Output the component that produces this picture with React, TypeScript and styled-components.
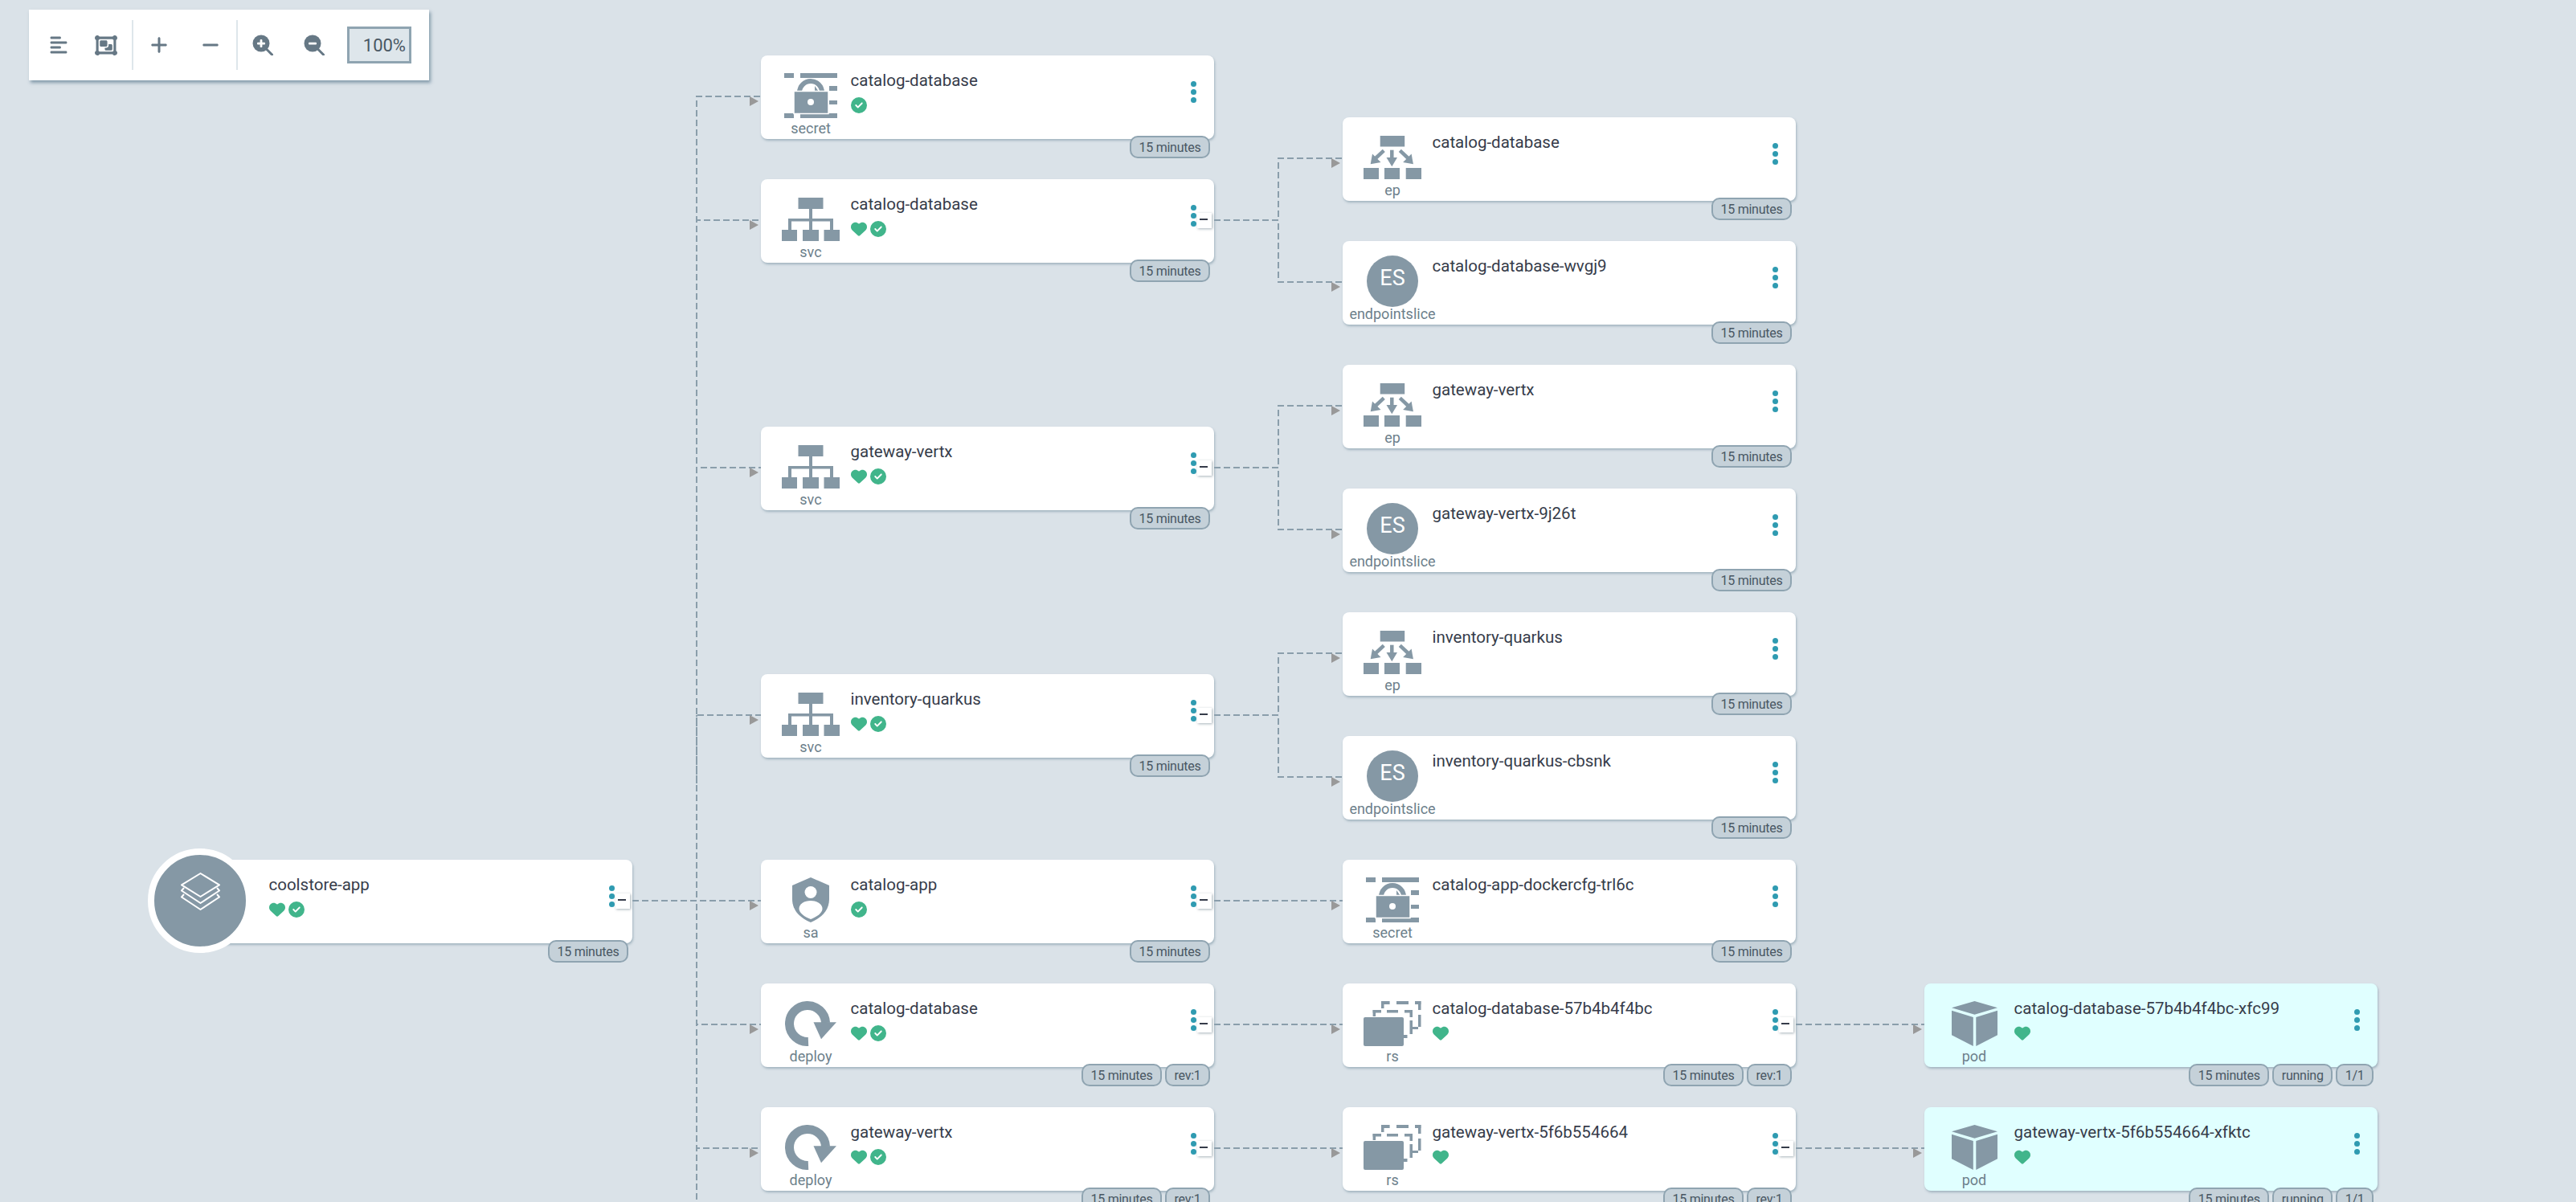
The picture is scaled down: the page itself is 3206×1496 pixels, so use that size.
import React from 'react';
import styled, { createGlobalStyle } from 'styled-components';
import { FaAlignLeft, FaObjectGroup, FaPlus, FaMinus, FaHeart, FaCircleCheck } from 'react-icons/fa6';

const Global = createGlobalStyle`
  html, body { margin: 0; padding: 0; background: #dae2e8; }
  body { font-family: Roboto, "Liberation Sans", sans-serif; }
`;

const Canvas = styled.div`
  position: relative;
  width: 3206px;
  height: 1496px;
  overflow: hidden;
  background: #dae2e8;
`;

const EdgeLayer = styled.svg`
  position: absolute;
  left: 0;
  top: 0;
`;

const Toolbar = styled.div`
  position: absolute;
  left: 36px;
  top: 12px;
  width: 498px;
  height: 88px;
  box-sizing: border-box;
  padding-left: 7px;
  display: flex;
  align-items: center;
  background: #fff;
  box-shadow: 2px 3px 4px rgba(96, 125, 145, 0.7);
  z-index: 5;
`;

const ToolButton = styled.div<{ $w: number }>`
  width: ${(p) => p.$w}px;
  height: 62px;
  display: flex;
  align-items: center;
  justify-content: center;
  color: #667885;
  svg { display: block; }
`;

const ToolDivider = styled.div<{ $ml?: number }>`
  width: 2px;
  height: 62px;
  margin-left: ${(p) => p.$ml ?? 0}px;
  background: #dee6eb;
`;

const ZoomInput = styled.div`
  box-sizing: border-box;
  width: 80px;
  height: 46px;
  margin-left: 8px;
  padding-right: 4px;
  display: flex;
  align-items: center;
  justify-content: flex-end;
  border: 3px solid #8fa4b1;
  background: #dee6eb;
  color: #495763;
  font-size: 22px;
  font-weight: 400;
`;

const Card = styled.div.attrs<{ $x: number; $y: number }>((p) => ({
  style: { left: p.$x, top: p.$y },
}))<{ $x: number; $y: number; $pod?: boolean }>`
  position: absolute;
  width: 564px;
  height: 104px;
  display: flex;
  border-radius: 8px;
  background: ${(p) => (p.$pod ? '#e0ffff' : '#fff')};
  box-shadow: 1px 2px 3px rgba(143, 164, 177, 0.75);
`;

const KindCol = styled.div`
  flex: 0 0 124px;
  width: 124px;
  height: 104px;
  display: flex;
  flex-direction: column;
  align-items: center;
`;

const IconArea = styled.div`
  box-sizing: border-box;
  height: 81px;
  padding-top: 22px;
  display: flex;
  justify-content: center;
  svg { display: block; }
`;

const KindLabel = styled.div`
  height: 20px;
  line-height: 20px;
  font-size: 18px;
  color: #6d7f8b;
  white-space: nowrap;
`;

const EsBadge = styled.div`
  box-sizing: border-box;
  width: 64px;
  height: 64px;
  margin-top: -4px;
  padding-bottom: 8px;
  border-radius: 50%;
  background: #8598a5;
  color: #fff;
  display: flex;
  align-items: center;
  justify-content: center;
  font-size: 27px;
  font-weight: 400;
`;

const Content = styled.div`
  flex: 1;
  margin-left: -12.5px;
  padding-top: 19px;
  min-width: 0;
`;

const Title = styled.div`
  height: 24px;
  line-height: 24px;
  font-size: 20.5px;
  color: #363c4a;
  white-space: nowrap;
`;

const StatusRow = styled.div`
  height: 21px;
  margin-top: 8px;
  display: flex;
  align-items: center;
  gap: 4px;
  color: #41b58b;
  svg { display: block; width: 20px; height: 20px; }
`;

const Dots = styled.div`
  flex: 0 0 7px;
  margin: 32px 22px 0 0;
  display: flex;
  flex-direction: column;
  gap: 3px;
  align-self: flex-start;
`;

const Dot = styled.span`
  display: block;
  width: 7px;
  height: 7px;
  border-radius: 50%;
  background: #2f9bb1;
`;

const Collapse = styled.div`
  position: absolute;
  right: 3px;
  top: 42px;
  width: 18px;
  height: 19px;
  background: #fff;
  box-shadow: 1px 1px 3px rgba(109, 127, 139, 0.6);
  &::after {
    content: '';
    position: absolute;
    left: 3px;
    top: 7px;
    width: 10px;
    height: 2px;
    background: #363c4a;
  }
`;

const Tags = styled.div`
  position: absolute;
  right: 5px;
  top: 100px;
  display: flex;
  gap: 4px;
`;

const Tag = styled.div`
  box-sizing: border-box;
  height: 28px;
  padding: 0 9.5px;
  display: flex;
  align-items: center;
  border: 2px solid #8fa4b1;
  border-radius: 10px;
  background: #c5d1d9;
  color: #495763;
  font-size: 16px;
  letter-spacing: -0.25px;
  white-space: nowrap;
`;

const RootBadge = styled.div`
  position: absolute;
  left: -39px;
  top: -14px;
  width: 130px;
  height: 130px;
  box-sizing: border-box;
  border: 8px solid #fff;
  border-radius: 50%;
  background: #8598a5;
  display: flex;
  justify-content: center;
  padding-top: 22px;
  svg { display: block; }
`;

const G = '#8598a5';

const SecretIcon = () => (
  <svg width="66" height="56" viewBox="0 0 66 56">
    <g fill={G}>
      <rect x="0" y="0" width="12" height="6" />
      <rect x="20" y="0" width="46" height="6" />
      <rect x="56" y="16" width="10" height="6" />
      <rect x="56" y="34" width="10" height="5" />
      <rect x="0" y="50" width="12" height="6" />
      <rect x="20" y="50" width="46" height="6" />
    </g>
    <path d="M19 24A14 14 0 0 1 47 24" fill="none" stroke={G} strokeWidth="6" />
    <path d="M38 16l5 7h-5z" fill={G} />
    <rect x="12" y="22.5" width="43" height="28" fill={G} stroke="#fff" strokeWidth="1.5" />
    <circle cx="33" cy="36" r="4" fill="#fff" />
  </svg>
);

const SvcIcon = () => (
  <svg width="72" height="54" viewBox="0 0 72 54" style={{ marginTop: 1 }}>
    <g fill={G}>
      <rect x="20.5" y="0" width="31" height="14" />
      <rect x="34" y="14" width="4" height="26" />
      <rect x="8" y="26" width="56" height="3.5" />
      <rect x="8" y="26" width="4" height="14" />
      <rect x="60" y="26" width="4" height="14" />
      <rect x="0" y="40" width="19" height="14" />
      <rect x="26" y="40" width="20" height="14" />
      <rect x="52.5" y="40" width="19.5" height="14" />
    </g>
  </svg>
);

const EpIcon = () => (
  <svg width="72" height="54" viewBox="0 0 72 54" style={{ marginTop: 1 }}>
    <g fill={G}>
      <rect x="20.7" y="0" width="30.5" height="13.5" />
      <rect x="0" y="40" width="19" height="14" />
      <rect x="26" y="40" width="19" height="14" />
      <rect x="52.7" y="40" width="19.3" height="14" />
      <polygon points="28.5,27 42,27 35.3,38.3" />
      <polygon points="8.7,35.3 11,22.5 21.5,33" />
      <polygon points="61.9,35.3 59.6,22.5 49.1,33" />
    </g>
    <g stroke={G} strokeWidth="4.5">
      <line x1="35.3" y1="17.7" x2="35.3" y2="28" />
      <line x1="25.3" y1="18.3" x2="15" y2="28" />
      <line x1="45.3" y1="18.3" x2="55.6" y2="28" />
    </g>
  </svg>
);

const DeployIcon = () => (
  <svg width="64" height="56" viewBox="0 0 64 56">
    <path d="M29 50.5A22.5 22.5 0 1 1 50.5 27" fill="none" stroke={G} strokeWidth="11" />
    <polygon points="35.5,26.3 64,26.3 45,47.3" fill={G} />
  </svg>
);

const RsIcon = () => (
  <svg width="72" height="56" viewBox="0 0 72 56">
    <g fill={G}>
      <rect x="22" y="0" width="10.6" height="4" />
      <rect x="41" y="0" width="15" height="4" />
      <rect x="64" y="0" width="7.4" height="4" />
      <rect x="22" y="0" width="3.5" height="9" />
      <rect x="68" y="0" width="3.5" height="11" />
      <rect x="68" y="17" width="3.5" height="15" />
      <rect x="61" y="32" width="7" height="3" />
      <rect x="11.6" y="11" width="10.4" height="3.5" />
      <rect x="29" y="11" width="14" height="3.5" />
      <rect x="51" y="11" width="10" height="3.5" />
      <rect x="11.6" y="11" width="3.5" height="8" />
      <rect x="57.5" y="11" width="3.5" height="9" />
      <rect x="57.5" y="24" width="3.5" height="17" />
      <rect x="50" y="42" width="4.5" height="4" />
      <rect x="0" y="20" width="50" height="36" rx="2" />
    </g>
  </svg>
);

const PodIcon = () => (
  <svg width="57" height="56" viewBox="0 0 57.2 56">
    <g fill={G}>
      <polygon points="28.6,0 57.2,8.3 28.6,16.7 0,8.3" />
      <polygon points="0,11.7 26.9,20 26.9,56 0,42.3" />
      <polygon points="30.4,20 57.2,11.7 57.2,42.3 30.4,56" />
    </g>
  </svg>
);

const SaIcon = () => (
  <svg width="46" height="56" viewBox="0 0 46 56">
    <path d="M23 0L46 10V27C46 42 35 51 23 56C11 51 0 42 0 27V10Z" fill={G} />
    <circle cx="23" cy="18.5" r="7.5" fill="#fff" />
    <path d="M23 29C31 29 37.5 33 37.5 39C37.5 44 31 49 23 52C15 49 8.5 44 8.5 39C8.5 33 15 29 23 29Z" fill="#fff" />
  </svg>
);

const LayersIcon = () => (
  <svg width="49" height="47" viewBox="-1 -1 49 47" fill="none" stroke="#fff" strokeWidth="2" strokeLinejoin="round">
    <polygon points="23.5,0 47,14.3 23.5,29 0,14.3" />
    <path d="M3 18L0 21.5L23.5 37L47 21.5L44 18" />
    <path d="M3 26L0 29.5L23.5 45L47 29.5L44 26" />
  </svg>
);

const SearchIcon = ({ plus }: { plus?: boolean }) => (
  <svg width="26" height="26" viewBox="0 0 26 26">
    <circle cx="11" cy="11" r="10.5" fill="currentColor" />
    <line x1="18" y1="18.5" x2="24.5" y2="25" stroke="currentColor" strokeWidth="3" strokeLinecap="round" />
    <rect x="6" y="9.7" width="10" height="2.8" rx="1" fill="#fff" />
    {plus && <rect x="9.6" y="6" width="2.8" height="10" rx="1" fill="#fff" />}
  </svg>
);

type Kind = 'secret' | 'svc' | 'ep' | 'endpointslice' | 'sa' | 'deploy' | 'rs' | 'pod';

const kindIcon = (k: Kind) => {
  switch (k) {
    case 'secret': return <SecretIcon />;
    case 'svc': return <SvcIcon />;
    case 'ep': return <EpIcon />;
    case 'endpointslice': return <EsBadge>ES</EsBadge>;
    case 'sa': return <SaIcon />;
    case 'deploy': return <DeployIcon />;
    case 'rs': return <RsIcon />;
    case 'pod': return <PodIcon />;
  }
};

interface NodeData {
  x: number;
  y: number;
  kind?: Kind;
  name: string;
  heart?: boolean;
  check?: boolean;
  collapse?: boolean;
  tags: string[];
  root?: boolean;
}

const C1 = 223, C2 = 947, C3 = 1671, C4 = 2395;
const T = '15 minutes';

const nodes: NodeData[] = [
  { x: C1, y: 1070, name: 'coolstore-app', heart: true, check: true, collapse: true, tags: [T], root: true },
  { x: C2, y: 69, kind: 'secret', name: 'catalog-database', check: true, tags: [T] },
  { x: C2, y: 223, kind: 'svc', name: 'catalog-database', heart: true, check: true, collapse: true, tags: [T] },
  { x: C2, y: 531, kind: 'svc', name: 'gateway-vertx', heart: true, check: true, collapse: true, tags: [T] },
  { x: C2, y: 839, kind: 'svc', name: 'inventory-quarkus', heart: true, check: true, collapse: true, tags: [T] },
  { x: C2, y: 1070, kind: 'sa', name: 'catalog-app', check: true, collapse: true, tags: [T] },
  { x: C2, y: 1224, kind: 'deploy', name: 'catalog-database', heart: true, check: true, collapse: true, tags: [T, 'rev:1'] },
  { x: C2, y: 1378, kind: 'deploy', name: 'gateway-vertx', heart: true, check: true, collapse: true, tags: [T, 'rev:1'] },
  { x: C3, y: 146, kind: 'ep', name: 'catalog-database', tags: [T] },
  { x: C3, y: 300, kind: 'endpointslice', name: 'catalog-database-wvgj9', tags: [T] },
  { x: C3, y: 454, kind: 'ep', name: 'gateway-vertx', tags: [T] },
  { x: C3, y: 608, kind: 'endpointslice', name: 'gateway-vertx-9j26t', tags: [T] },
  { x: C3, y: 762, kind: 'ep', name: 'inventory-quarkus', tags: [T] },
  { x: C3, y: 916, kind: 'endpointslice', name: 'inventory-quarkus-cbsnk', tags: [T] },
  { x: C3, y: 1070, kind: 'secret', name: 'catalog-app-dockercfg-trl6c', tags: [T] },
  { x: C3, y: 1224, kind: 'rs', name: 'catalog-database-57b4b4f4bc', heart: true, collapse: true, tags: [T, 'rev:1'] },
  { x: C3, y: 1378, kind: 'rs', name: 'gateway-vertx-5f6b554664', heart: true, collapse: true, tags: [T, 'rev:1'] },
  { x: C4, y: 1224, kind: 'pod', name: 'catalog-database-57b4b4f4bc-xfc99', heart: true, tags: [T, 'running', '1/1'] },
  { x: C4, y: 1378, kind: 'pod', name: 'gateway-vertx-5f6b554664-xfktc', heart: true, tags: [T, 'running', '1/1'] },
];

// source column right edge, source y, target column left edge, target y
const edges: [number, number, number, number][] = [
  ...[120, 274, 582, 890, 1121, 1275, 1429, 1583].map((y) => [787, 1121, C2, y] as [number, number, number, number]),
  [1511, 274, C3, 197],
  [1511, 274, C3, 351],
  [1511, 582, C3, 505],
  [1511, 582, C3, 659],
  [1511, 890, C3, 813],
  [1511, 890, C3, 967],
  [1511, 1121, C3, 1121],
  [1511, 1275, C3, 1275],
  [1511, 1429, C3, 1429],
  [2235, 1275, C4, 1275],
  [2235, 1429, C4, 1429],
];

const edgePath = ([x1, y1, x2, y2]: [number, number, number, number]) => {
  const mid = x1 + 80;
  return y1 === y2 ? `M${x1} ${y1}H${x2}` : `M${x1} ${y1}H${mid}V${y2}H${x2}`;
};

const Node = ({ n }: { n: NodeData }) => (
  <Card $x={n.x} $y={n.y} $pod={n.kind === 'pod'}>
    <KindCol>
      {n.kind && (
        <>
          <IconArea>{kindIcon(n.kind)}</IconArea>
          <KindLabel>{n.kind}</KindLabel>
        </>
      )}
    </KindCol>
    {n.root && (
      <RootBadge>
        <LayersIcon />
      </RootBadge>
    )}
    <Content>
      <Title>{n.name}</Title>
      <StatusRow>
        {n.heart && <FaHeart />}
        {n.check && <FaCircleCheck />}
      </StatusRow>
    </Content>
    <Dots>
      <Dot />
      <Dot />
      <Dot />
    </Dots>
    {n.collapse && <Collapse />}
    <Tags>
      {n.tags.map((t) => (
        <Tag key={t}>{t}</Tag>
      ))}
    </Tags>
  </Card>
);

export default function App() {
  return (
    <>
      <Global />
      <Canvas>
        <EdgeLayer width="3206" height="1496" viewBox="0 0 3206 1496">
          <g fill="none" stroke="#8a9eab" strokeWidth="2" strokeDasharray="8 4">
            {edges.map((e, i) => (
              <path key={i} d={edgePath(e)} />
            ))}
            <path d="M867 890V975" strokeDashoffset="6" />
          </g>
          <g fill="#999">
            {edges
              .filter((e) => e[3] < 1496)
              .map((e, i) => (
                <polygon key={i} points={`${e[2] - 14},${e[3]} ${e[2] - 3},${e[3] + 6} ${e[2] - 14},${e[3] + 12}`} />
              ))}
          </g>
        </EdgeLayer>
        {nodes.map((n, i) => (
          <Node key={i} n={n} />
        ))}
        <Toolbar>
          <ToolButton $w={60}><FaAlignLeft size={24} /></ToolButton>
          <ToolButton $w={58}><FaObjectGroup style={{ width: 28, height: 25 }} /></ToolButton>
          <ToolDivider $ml={3} />
          <ToolButton $w={64}><FaPlus size={24} /></ToolButton>
          <ToolButton $w={64}><FaMinus size={24} /></ToolButton>
          <ToolDivider />
          <ToolButton $w={62}><SearchIcon plus /></ToolButton>
          <ToolButton $w={66}><SearchIcon /></ToolButton>
          <ZoomInput>100%</ZoomInput>
        </Toolbar>
      </Canvas>
    </>
  );
}
